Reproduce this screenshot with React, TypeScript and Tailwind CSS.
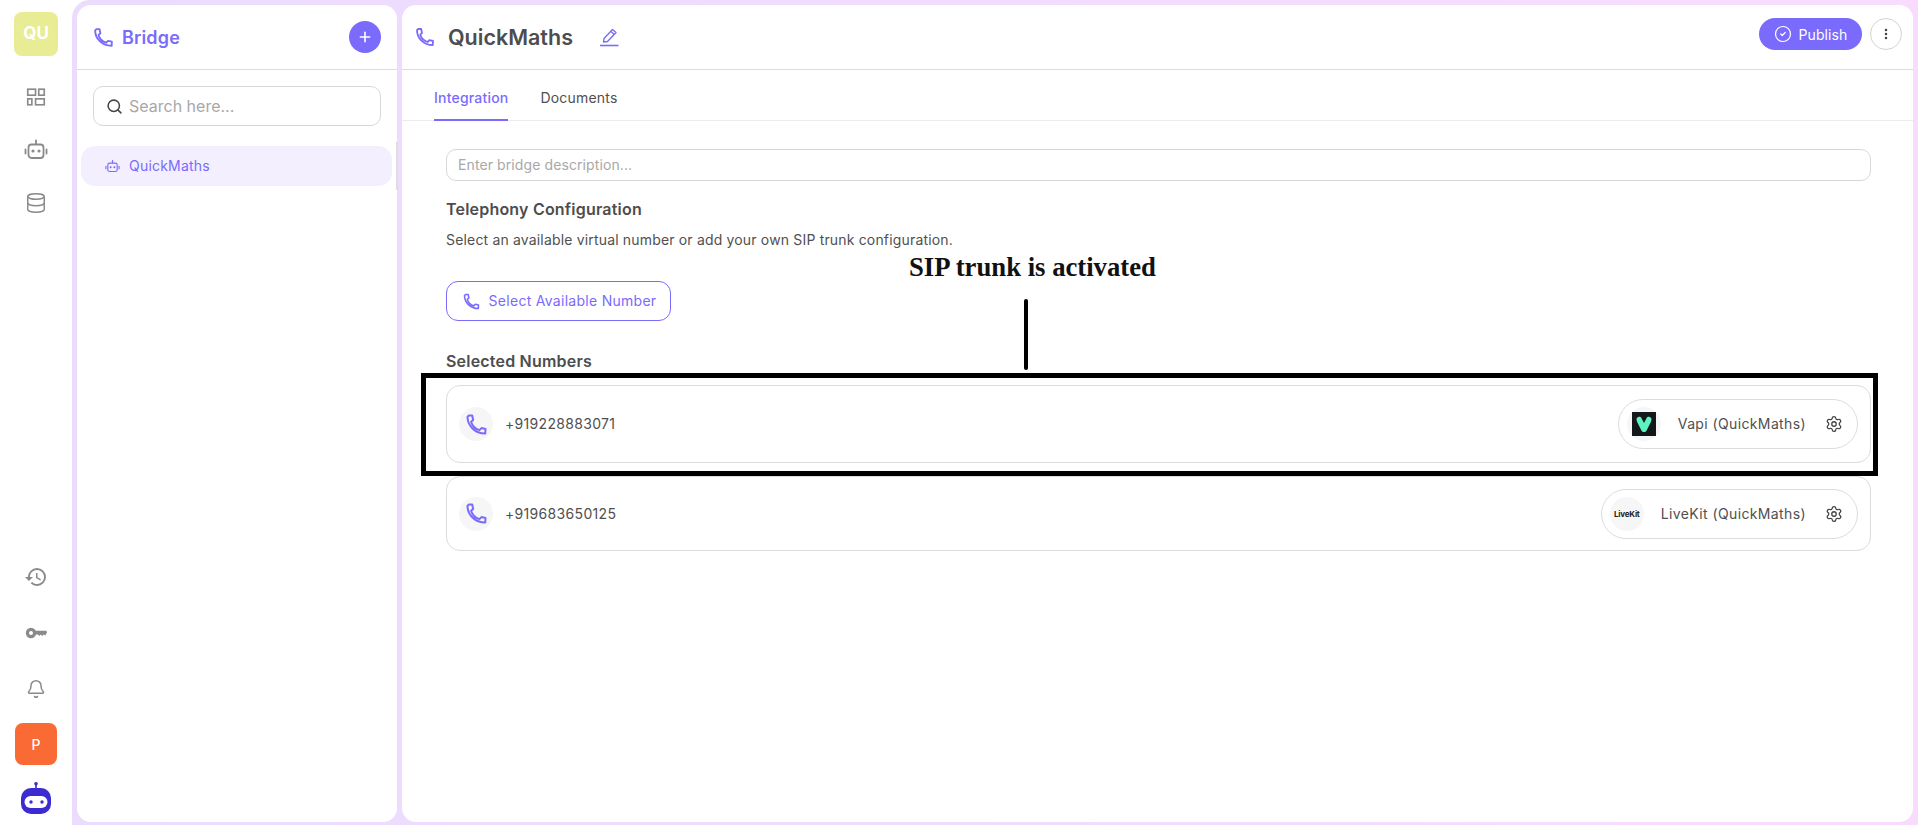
import { Bell, CircleCheck, Database, EllipsisVertical, Plus, Search, Settings } from "lucide-react";
import { MdHistory } from "react-icons/md";

function PhoneIcon({ className }: { className: string }) {
  return (
    <svg viewBox="0 0 24 24" fill="none" stroke="currentColor" strokeWidth="1.8" strokeLinejoin="round" strokeLinecap="round" className={className}>
      <path d="M4 5.2 C4 13 10.5 20 19.8 20 L20 16 L16.4 15.2 L14.6 17 C11 16 8.2 13 7.2 9.6 L9 8 L8.2 4 L5.2 4 Z" />
    </svg>
  );
}

function GridIcon({ className }: { className: string }) {
  return (
    <svg viewBox="0 0 24 24" fill="none" stroke="currentColor" strokeWidth="1.8" className={className}>
      <rect x="3" y="3.5" width="8.5" height="6.5" />
      <rect x="15" y="3.5" width="6" height="6.5" />
      <rect x="3" y="14" width="4.5" height="6.5" />
      <rect x="11.5" y="14" width="9.5" height="6.5" />
    </svg>
  );
}

function BotIcon({ className }: { className: string }) {
  return (
    <svg viewBox="0 0 24 24" fill="none" stroke="currentColor" strokeWidth="1.8" strokeLinecap="round" className={className}>
      <path d="M12 2.5V6" />
      <rect x="4.5" y="6.5" width="15" height="13.5" rx="3" />
      <path d="M1.5 11.5v4M22.5 11.5v4" />
      <circle cx="9" cy="13" r="0.7" fill="currentColor" />
      <circle cx="15" cy="13" r="0.7" fill="currentColor" />
    </svg>
  );
}

function KeyIcon({ className }: { className: string }) {
  return (
    <svg viewBox="0 0 24 24" fill="none" className={className}>
      <circle cx="7" cy="12" r="3.6" stroke="currentColor" strokeWidth="3.2" />
      <path d="M11 9.8H22.4L23 11.6L21.2 14.6L19.6 13.4L18.2 15L16.8 13.4L15.4 15L14 13.4H11Z" fill="currentColor" />
    </svg>
  );
}

function PencilIcon({ className }: { className: string }) {
  return (
    <svg viewBox="0 0 20 20" fill="none" stroke="currentColor" strokeWidth="1.4" strokeLinejoin="round" className={className}>
      <path d="M4.5 15L5 11.5L13.5 2.5L17 5.5L8.5 14.5Z" />
      <path d="M11.8 4.3L15.3 7.4" />
      <path d="M1 18.5H19.5" strokeWidth="1.6" />
    </svg>
  );
}

function BrandBot() {
  return (
    <svg viewBox="0 0 30 32" className="w-[30px] h-[32px]">
      <circle cx="15" cy="1.8" r="1.8" fill="#3b2bd1" />
      <rect x="14.2" y="2" width="1.6" height="5" fill="#3b2bd1" />
      <rect x="0" y="6" width="30" height="26" rx="10" fill="#3b2bd1" />
      <rect x="3.5" y="14" width="23" height="12" rx="6" fill="#fff" />
      <circle cx="10" cy="20" r="1.7" fill="#3b2bd1" />
      <circle cx="21" cy="20" r="1.7" fill="#3b2bd1" />
    </svg>
  );
}

function VapiLogo() {
  return (
    <span className="w-[34px] h-[34px] rounded-full bg-[#f6f6f6] flex items-center justify-center shrink-0">
      <svg viewBox="0 0 24 24" className="w-6 h-6">
        <rect width="24" height="24" fill="#14171a" />
        <path d="M4.5 7.5C4.5 4.6 8.4 3.9 9.6 6.4L12 11L14.4 6.4C15.6 3.9 19.5 4.6 19.5 7.5C19.5 8.6 19 9.6 18.6 10.4L14.6 18.6C13.6 20.6 10.4 20.6 9.4 18.6L5.4 10.4C5 9.6 4.5 8.6 4.5 7.5Z" fill="#5df2c0" />
      </svg>
    </span>
  );
}

function NumberCard({ number, provider, logo, className }: { number: string; provider: string; logo: React.ReactNode; className: string }) {
  return (
    <div className={`flex items-center justify-between rounded-[14px] border border-[#dcdcdc] pl-[12px] pr-[12px] ${className}`}>
      <div className="flex items-center gap-[12px]">
        <span className="w-[34px] h-[34px] rounded-full bg-[#f6f6f6] flex items-center justify-center">
          <PhoneIcon className="w-[27px] h-[27px] text-[#7a6bfd]" />
        </span>
        <span className="-mt-px text-[14px] tracking-[0.32px] text-[#505050]">{number}</span>
      </div>
      <div className="flex items-center h-[50px] rounded-full border border-[#dcdcdc] pl-2 pr-[14px]">
        {logo}
        <span className="-mt-px ml-[17px] text-[14px] tracking-[0.38px] text-[#505050]">{provider}</span>
        <Settings className="ml-[19px] w-[18px] h-[18px] text-[#444]" strokeWidth={1.7} />
      </div>
    </div>
  );
}

export default function App() {
  return (
    <div className="relative flex h-screen w-full overflow-hidden bg-white font-['Inter',sans-serif]">
      {/* icon rail */}
      <aside className="w-[72px] shrink-0 flex flex-col items-center pt-3 pb-[11px] text-[#8a8a8a]">
        <div className="w-11 h-11 rounded-lg bg-[#e8ec94] text-white font-bold text-[17px] flex items-center justify-center">QU</div>
        <GridIcon className="w-[22px] h-[22px] mt-[30px]" />
        <BotIcon className="w-6 h-6 mt-[30px]" />
        <Database className="w-[22px] h-[22px] mt-[30px]" strokeWidth={1.6} />
        <MdHistory className="w-6 h-6 mt-auto" />
        <KeyIcon className="w-6 h-6 mt-8" />
        <Bell className="w-5 h-5 mt-[34px]" strokeWidth={1.8} />
        <div className="w-[42px] h-[42px] rounded-lg bg-[#f96a35] text-white text-[14px] font-medium flex items-center justify-center mt-6">P</div>
        <div className="mt-[17px] h-[32px]"><BrandBot /></div>
      </aside>

      {/* lavender frame */}
      <div className="flex-1 flex gap-[5px] p-[5px] pb-[3px] rounded-tl-[18px] bg-gradient-to-r from-[#ebdcfd] to-[#f9dcfd]">
        <section className="relative w-[320px] shrink-0 bg-white rounded-[14px] flex flex-col">
          <div className="h-[65px] border-b border-[#dcdcdc] flex items-center justify-between pl-[14px] pr-4 shrink-0">
            <div className="flex items-center gap-[6px] text-[#7a6bfd]">
              <PhoneIcon className="w-[25px] h-[25px]" />
              <span className="text-[18px] font-semibold tracking-[0.15px]">Bridge</span>
            </div>
            <button className="w-8 h-8 rounded-full bg-[#7a6bfd] text-white flex items-center justify-center">
              <Plus className="w-4 h-4" strokeWidth={2.4} />
            </button>
          </div>
          <div className="mx-4 mt-4 h-10 rounded-[10px] border border-[#d8d8d8] flex items-center pl-[12px] gap-[6px]">
            <Search className="w-[17px] h-[17px] text-[#444]" strokeWidth={2.2} />
            <span className="text-[16px] text-[#a8a8a8]">Search here...</span>
          </div>
          <div className="ml-1 mr-[5px] mt-5 h-10 rounded-[14px] bg-[#f3effe] flex items-center pl-6 gap-[9px] text-[#7a6bfd]">
            <BotIcon className="w-[15px] h-[15px]" />
            <span className="-mt-px text-[14px] tracking-[0.2px]">QuickMaths</span>
          </div>
          <div className="absolute right-[-1px] top-[137px] h-12 w-[2px] bg-[#dedede]" />
        </section>

        <main className="flex-1 bg-white rounded-[14px] flex flex-col">
          <div className="h-[65px] shrink-0 border-b border-[#dcdcdc] flex items-center pl-[11px] pr-[11px]">
            <PhoneIcon className="w-6 h-6 text-[#7a6bfd]" />
            <h1 className="ml-[11px] text-[21.5px] font-semibold text-[#4d4d4d]">QuickMaths</h1>
            <PencilIcon className="ml-[26px] w-[20px] h-[20px] text-[#7a6bfd]" />
            <div className="ml-auto mb-[6px] flex items-center gap-2">
              <button className="h-8 w-[103px] rounded-full bg-[#7a6bfd] text-white flex items-center justify-center gap-[7px] text-[14px] tracking-[0.1px]">
                <CircleCheck className="w-[18px] h-[18px]" strokeWidth={1.6} />
                Publish
              </button>
              <button className="w-8 h-8 rounded-full border border-[#d4d4d4] flex items-center justify-center text-[#444]">
                <EllipsisVertical className="w-[14px] h-[14px]" strokeWidth={2.4} />
              </button>
            </div>
          </div>
          <div className="h-[51px] shrink-0 border-b border-[#ececec] flex items-stretch pl-8 gap-8 text-[14px] tracking-[0.2px]">
            <span className="flex items-center text-[#7a6bfd] border-b-2 border-[#7a6bfd] -mb-px pt-[5px] font-medium">Integration</span>
            <span className="flex items-center text-[#505050] pt-[5px]">Documents</span>
          </div>
          <div className="pl-11 pr-[42px] pt-[28px] flex flex-col">
            <div className="h-8 rounded-[10px] border border-[#d8d8d8] flex items-center pl-[11px] pb-[2px] text-[14px] tracking-[0.1px] text-[#a8a8a8]">Enter bridge description...</div>
            <h2 className="mt-[18px] text-[16px] leading-[20px] font-semibold tracking-[0.2px] text-[#4d4d4d]">Telephony Configuration</h2>
            <p className="mt-[11px] text-[14px] leading-[20px] tracking-[0.17px] text-[#505050]">Select an available virtual number or add your own SIP trunk configuration.</p>
            <button className="mt-[31px] w-[225px] h-[40px] rounded-[12px] border border-[#7a6bfd] text-[#7a6bfd] text-[14px] tracking-[0.28px] flex items-center justify-center gap-[7px]">
              <PhoneIcon className="w-[21px] h-[21px]" />
              <span className="-mt-[2px]">Select Available Number</span>
            </button>
            <h2 className="mt-[30px] text-[16px] leading-[20px] font-semibold tracking-[0.2px] text-[#4d4d4d]">Selected Numbers</h2>
            <NumberCard className="mt-[14px] h-[78px]" number="+919228883071" provider="Vapi (QuickMaths)" logo={<VapiLogo />} />
            <NumberCard
              className="mt-[13px] h-[75px]"
              number="+919683650125"
              provider="LiveKit (QuickMaths)"
              logo={
                <span className="w-[34px] h-[34px] rounded-full bg-[#f6f6f6] flex items-center justify-center text-[8px] tracking-[-0.2px] font-bold text-[#222] shrink-0">LiveKit</span>
              }
            />
          </div>
        </main>
      </div>

      {/* annotation drawn over the screenshot */}
      <div className="absolute left-[909px] top-[251px] text-[26.7px] leading-[32px] font-bold text-[#111] font-['Liberation_Serif',serif] whitespace-nowrap">SIP trunk is activated</div>
      <div className="absolute left-[1024px] top-[299px] w-1 h-[71px] rounded-full bg-black" />
      <div className="absolute left-[421px] top-[373px] w-[1457px] h-[103px] border-[5px] border-black" />
    </div>
  );
}
